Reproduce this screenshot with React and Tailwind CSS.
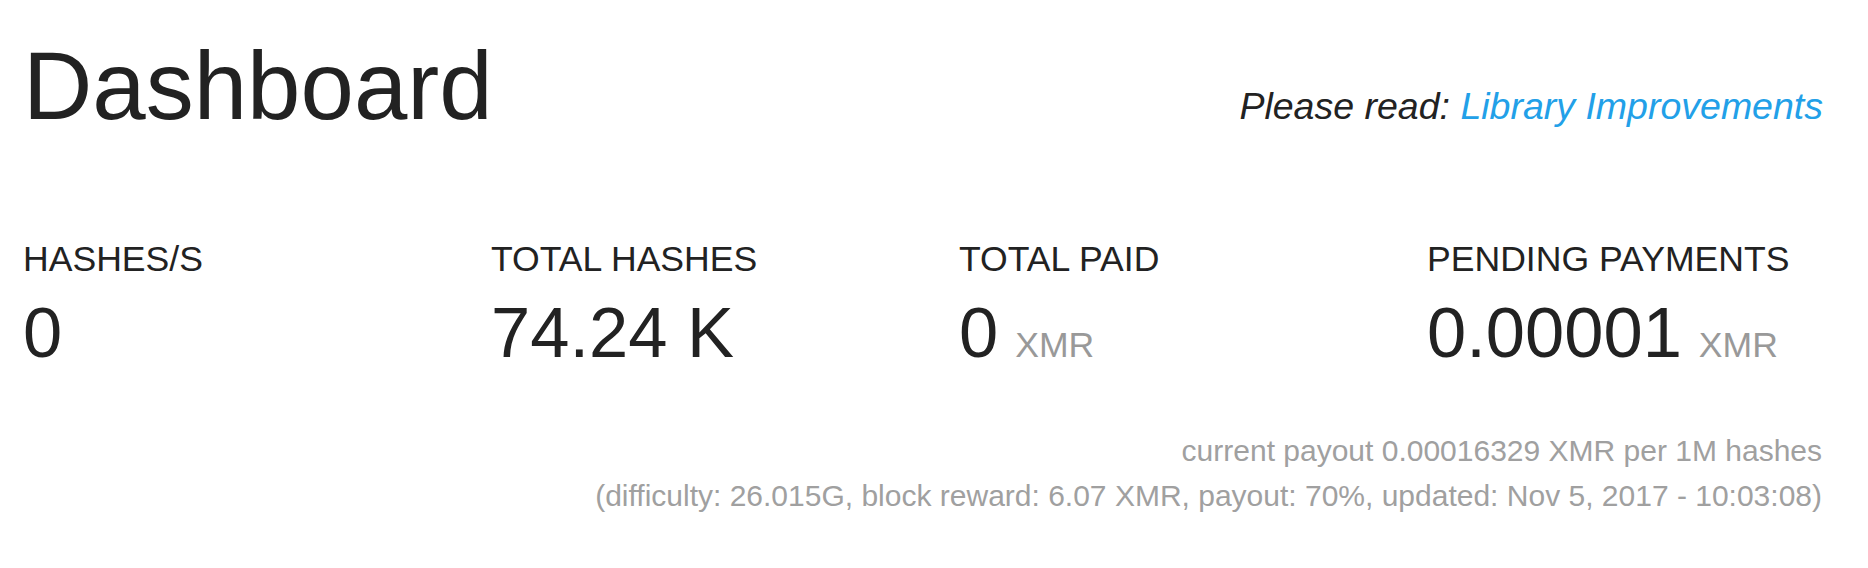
import React from 'react';

const stats = [
    { label: 'HASHES/S', value: '0' },
    { label: 'TOTAL HASHES', value: '74.24 K' },
    { label: 'TOTAL PAID', value: '0', unit: 'XMR' },
    { label: 'PENDING PAYMENTS', value: '0.00001', unit: 'XMR' },
];

const App = () => {
    return (
        <div className="min-h-[568px] bg-white text-[#222] font-['Liberation_Sans',Arial,sans-serif]">
            <div className="flex items-baseline justify-between pl-[23px] pr-[45px] pt-[38px]">
                <h1 className="text-[96px] leading-none font-normal">Dashboard</h1>
                <p className="text-[37.5px] leading-none italic">
                    Please read: <a href="#" className="text-[#22a0e8]">Library Improvements</a>
                </p>
            </div>

            <div className="flex pl-[23px] mt-[108px]">
                {stats.map(s => (
                    <div key={s.label} className="w-[468px] shrink-0">
                        <div className="text-[35.6px] leading-none">{s.label}</div>
                        <div className="mt-[20px] text-[70.5px] leading-none whitespace-nowrap">
                            {s.value}
                            {s.unit && (
                                <span className="ml-[17px] text-[35.6px] text-[#999]">{s.unit}</span>
                            )}
                        </div>
                    </div>
                ))}
            </div>

            <div className="mt-[60px] pr-[46px] text-right text-[30px] leading-[45px] text-[#a0a0a0]">
                <div>current payout 0.00016329 XMR per 1M hashes</div>
                <div>(difficulty: 26.015G, block reward: 6.07 XMR, payout: 70%, updated: Nov 5, 2017 - 10:03:08)</div>
            </div>
        </div>
    );
};

export default App;
